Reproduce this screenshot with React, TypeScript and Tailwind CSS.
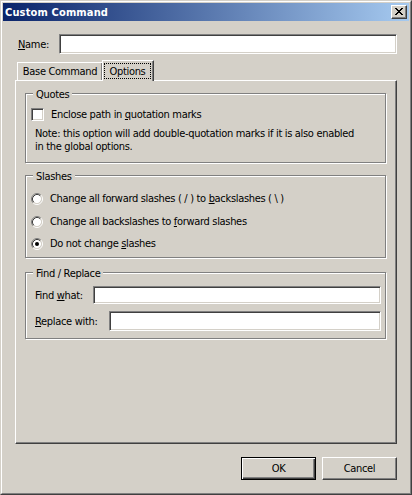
import React from "react";

const sunken =
  "border border-t-[#808080] border-l-[#808080] border-r-white border-b-white shadow-[inset_1px_1px_0_#404040,inset_-1px_-1px_0_#d4d0c8] bg-white";

function Radio({ checked }: { checked?: boolean }) {
  return (
    <svg width="12" height="12" viewBox="0 0 12 12" className="shrink-0">
      <circle cx="6" cy="6" r="4.2" fill="white" />
      <path d="M2.11 9.89 A5.5 5.5 0 0 1 9.89 2.11" stroke="#808080" fill="none" />
      <path d="M9.89 2.11 A5.5 5.5 0 0 1 2.11 9.89" stroke="#ffffff" fill="none" />
      <path d="M2.82 9.18 A4.5 4.5 0 0 1 9.18 2.82" stroke="#404040" fill="none" />
      <path d="M9.18 2.82 A4.5 4.5 0 0 1 2.82 9.18" stroke="#d4d0c8" fill="none" />
      {checked && <circle cx="6" cy="6" r="2" fill="black" />}
    </svg>
  );
}

function Group({
  label,
  className,
  children,
}: {
  label: string;
  className: string;
  children: React.ReactNode;
}) {
  return (
    <div
      className={`relative ml-[9px] w-[361px] border border-[#808080] shadow-[inset_1px_1px_0_#fff,1px_1px_0_#fff] ${className}`}
    >
      <span className="absolute -top-[6px] left-[7px] bg-[#d4d0c8] px-[3px] leading-[13px] whitespace-nowrap">
        {label}
      </span>
      {children}
    </div>
  );
}

function RadioRow({
  checked,
  className,
  children,
}: {
  checked?: boolean;
  className: string;
  children: React.ReactNode;
}) {
  return (
    <div className={`ml-[5px] flex h-[13px] items-center ${className}`}>
      <Radio checked={checked} />
      <span className="ml-[7px] whitespace-nowrap">{children}</span>
    </div>
  );
}

export default function App() {
  return (
    <div className="w-[412px] h-[495px] bg-[#d4d0c8] font-['DejaVu_Sans_Condensed','Liberation_Sans',Arial,sans-serif] text-[11px] leading-[13px] tracking-[-0.32px] text-black border border-t-[#d4d0c8] border-l-[#d4d0c8] border-r-[#404040] border-b-[#404040]">
      <div className="h-full flex flex-col p-px border border-t-white border-l-white border-r-[#808080] border-b-[#808080]">
        {/* Title bar */}
        <div className="h-[18px] shrink-0 flex items-center bg-[linear-gradient(to_right,#0a246a,#a6caf0)]">
          <span className="pl-[2px] font-bold tracking-[0.15px] text-white whitespace-nowrap">Custom Command</span>
          <div className="ml-auto mr-[2px] w-[16px] h-[14px] bg-[#d4d0c8] border border-t-white border-l-white border-r-[#404040] border-b-[#404040] shadow-[inset_-1px_-1px_0_#808080] pl-[3px] pt-[2px]">
            <svg width="8" height="7" viewBox="0 0 8 7" shapeRendering="crispEdges" className="block">
              <rect x="0" y="0" width="2" height="1" fill="black" />
              <rect x="6" y="0" width="2" height="1" fill="black" />
              <rect x="1" y="1" width="2" height="1" fill="black" />
              <rect x="5" y="1" width="2" height="1" fill="black" />
              <rect x="2" y="2" width="4" height="1" fill="black" />
              <rect x="3" y="3" width="2" height="1" fill="black" />
              <rect x="2" y="4" width="4" height="1" fill="black" />
              <rect x="1" y="5" width="2" height="1" fill="black" />
              <rect x="5" y="5" width="2" height="1" fill="black" />
              <rect x="0" y="6" width="2" height="1" fill="black" />
              <rect x="6" y="6" width="2" height="1" fill="black" />
            </svg>
          </div>
        </div>

        {/* Name row */}
        <div className="mt-[13px] flex h-[20px] items-center pl-[15px] pr-[12px]">
          <span className="w-[41px] whitespace-nowrap">
            <span className="underline">N</span>ame:
          </span>
          <div className={`h-[20px] w-[338px] ${sunken}`} />
        </div>

        {/* Tabs */}
        <div className="mt-[6px] flex h-[20px] items-end pl-[14px]">
          <div className="flex h-[18px] w-[86px] items-center justify-center border-l border-t border-r border-l-white border-t-white border-r-[#404040] shadow-[inset_-1px_0_0_#808080] whitespace-nowrap">
            Base Command
          </div>
          <div className="relative z-10 -ml-px -mb-px flex h-[21px] w-[52px] items-start bg-[#d4d0c8] pl-px pt-[2px] border-l border-t border-r border-l-white border-t-white border-r-[#404040] shadow-[inset_-1px_0_0_#808080]">
            <span className="flex h-[16px] w-[47px] items-center justify-center border border-dotted border-black whitespace-nowrap">
              Options
            </span>
          </div>
        </div>

        {/* Panel */}
        <div className="ml-[12px] flex h-[364px] w-[382px] flex-col border border-t-white border-l-white border-r-[#404040] border-b-[#404040] shadow-[inset_-1px_-1px_0_#808080]">
          <Group label="Quotes" className="mt-[12px] h-[70px]">
            <div className="ml-[5px] mt-[14px] flex h-[13px] items-center">
              <div className={`h-[13px] w-[13px] shrink-0 ${sunken}`} />
              <span className="ml-[7px] whitespace-nowrap">
                Enclose path in <span className="underline">q</span>uotation marks
              </span>
            </div>
            <div className="mt-[6px] pl-[9px] whitespace-nowrap">
              Note: this option will add double-quotation marks if it is also enabled
              <br />
              in the global options.
            </div>
          </Group>

          <Group label="Slashes" className="mt-[12px] h-[83px]">
            <RadioRow className="mt-[16px]">
              Change all forward slashes ( / ) to <span className="underline">b</span>ackslashes ( \ )
            </RadioRow>
            <RadioRow className="mt-[10px]">
              Change all backslashes to <span className="underline">f</span>orward slashes
            </RadioRow>
            <RadioRow checked className="mt-[9px]">
              Do not change <span className="underline">s</span>lashes
            </RadioRow>
          </Group>

          <Group label="Find / Replace" className="mt-[14px] h-[67px]">
            <div className="mt-[13px] flex items-center pl-[9px] pr-[4px]">
              <span className="flex-1 whitespace-nowrap">
                Find <span className="underline">w</span>hat:
              </span>
              <div className={`h-[18px] w-[288px] ${sunken}`} />
            </div>
            <div className="mt-[7px] flex items-center pl-[9px] pr-[4px]">
              <span className="flex-1 whitespace-nowrap">
                <span className="underline">R</span>eplace with:
              </span>
              <div className={`h-[20px] w-[272px] ${sunken}`} />
            </div>
          </Group>
        </div>

        {/* Buttons */}
        <div className="mt-[13px] flex justify-end gap-[6px] pr-[12px]">
          <button className="flex h-[23px] w-[75px] items-center justify-center bg-[#d4d0c8] p-0 border border-black shadow-[inset_1px_1px_0_#fff,inset_-1px_-1px_0_#404040,inset_-2px_-2px_0_#808080]">
            OK
          </button>
          <button className="flex h-[23px] w-[75px] items-center justify-center bg-[#d4d0c8] p-0 border border-t-white border-l-white border-r-[#404040] border-b-[#404040] shadow-[inset_-1px_-1px_0_#808080]">
            Cancel
          </button>
        </div>
      </div>
    </div>
  );
}
